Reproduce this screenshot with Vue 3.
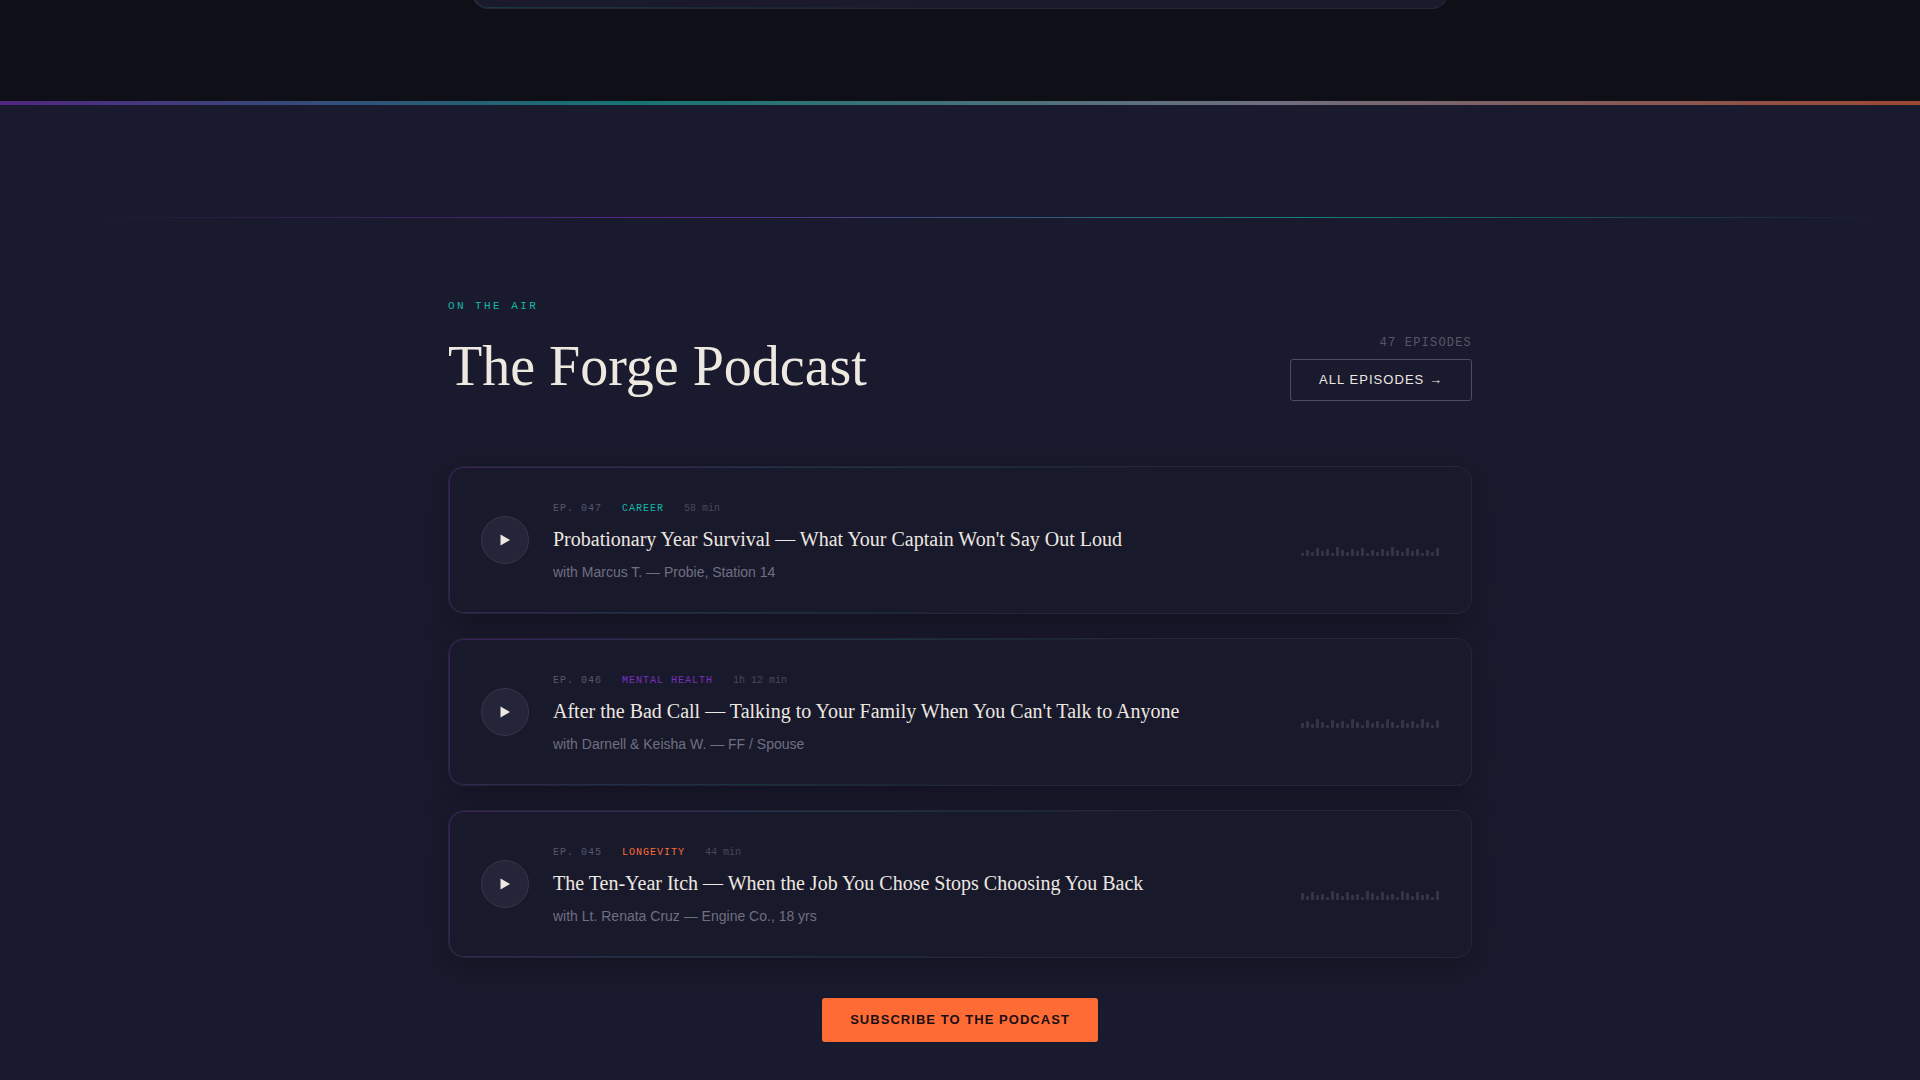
<template>
  <div class="page">
    <section class="previous">
      <div class="panel"></div>
    </section>
    <div class="band"></div>
    <main class="podcast">
      <div class="hairline"></div>
      <div class="container">
        <header class="head">
          <div>
            <p class="eyebrow">ON THE AIR</p>
            <h1>The Forge Podcast</h1>
          </div>
          <div class="head-side">
            <span class="count">47 EPISODES</span>
            <a href="#episodes" class="btn btn-outline">ALL EPISODES →</a>
          </div>
        </header>

        <div id="episodes" class="episodes">
          <article v-for="ep in episodes" :key="ep.number" class="episode">
            <button type="button" class="play" :aria-label="`Play ${ep.title}`">
              <svg width="10" height="12" viewBox="0 0 10 12" aria-hidden="true">
                <path d="M0.5 0.5L10 6L0.5 11.5Z" fill="#ede8e0" />
              </svg>
            </button>
            <div class="info">
              <div class="meta">
                <span class="number">EP. {{ ep.number }}</span>
                <span class="topic" :class="ep.tone">{{ ep.topic }}</span>
                <span class="length">{{ ep.length }}</span>
              </div>
              <h2>{{ ep.title }}</h2>
              <p class="guest">with {{ ep.guest }}</p>
            </div>
            <div class="wave" aria-hidden="true">
              <span v-for="(h, i) in ep.wave" :key="i" :style="{ height: `${h}px` }"></span>
            </div>
          </article>
        </div>

        <div class="subscribe">
          <a href="#subscribe" class="btn btn-solid">SUBSCRIBE TO THE PODCAST</a>
        </div>
      </div>
    </main>
  </div>
</template>

<script setup>
const episodes = [
  {
    number: "047",
    topic: "CAREER",
    tone: "teal",
    length: "58 min",
    title: "Probationary Year Survival — What Your Captain Won't Say Out Loud",
    guest: "Marcus T. — Probie, Station 14",
    wave: [3, 6, 4, 8, 5, 7, 3, 9, 6, 4, 7, 5, 8, 3, 6, 4, 7, 5, 9, 6, 4, 8, 5, 7, 3, 6, 4, 8],
  },
  {
    number: "046",
    topic: "MENTAL HEALTH",
    tone: "purple",
    length: "1h 12 min",
    title: "After the Bad Call — Talking to Your Family When You Can't Talk to Anyone",
    guest: "Darnell & Keisha W. — FF / Spouse",
    wave: [5, 7, 4, 9, 6, 3, 8, 5, 7, 4, 9, 6, 3, 8, 5, 7, 4, 9, 6, 3, 8, 5, 7, 4, 9, 6, 3, 8],
  },
  {
    number: "045",
    topic: "LONGEVITY",
    tone: "orange",
    length: "44 min",
    title: "The Ten-Year Itch — When the Job You Chose Stops Choosing You Back",
    guest: "Lt. Renata Cruz — Engine Co., 18 yrs",
    wave: [7, 4, 8, 5, 6, 3, 9, 7, 4, 8, 5, 6, 3, 9, 7, 4, 8, 5, 6, 3, 9, 7, 4, 8, 5, 6, 3, 9],
  },
];
</script>

<style>
body {
  background: #1a1a2e;
}
</style>

<style scoped>
.page {
  color: #ede8e0;
  font-family: "Liberation Sans", Arial, sans-serif;
  background: #1a1a2e;
  min-height: 100vh;
  overflow: hidden;
}

h1,
h2,
p {
  margin: 0;
  font-weight: 400;
}

.previous {
  display: flow-root;
  overflow: hidden;
  background: #0f0f17;
  padding: 0 24px 92px;
}

/* only the foot of this panel shows above the fold line */
.panel {
  position: relative;
  box-sizing: border-box;
  max-width: 976px;
  height: 49px;
  margin: -40px auto 0;
  background: #1a1a2c;
  border: 1px solid rgba(255, 255, 255, 0.06);
  border-radius: 16px;
}

.panel::before,
.episode::before {
  content: "";
  position: absolute;
  inset: 0;
  padding: 1px;
  border-radius: 15px;
  background: linear-gradient(135deg, rgba(123, 47, 190, 0.35), rgba(20, 184, 166, 0.18) 38%, transparent 62%);
  mask: linear-gradient(#000 0 0) content-box exclude, linear-gradient(#000 0 0);
  pointer-events: none;
}

.panel::before {
  background: linear-gradient(90deg, rgba(20, 184, 166, 0.2), transparent 50%);
}

.band {
  height: 4px;
  background: linear-gradient(90deg, #7b2fbe, #14b8a6 33%, #aeaebd 66%, #ff6b35);
  opacity: 0.57;
}

.podcast {
  padding: 112px 24px 37px;
}

.hairline {
  height: 1px;
  margin: 0 -24px 80px;
  background: linear-gradient(90deg, transparent 4%, #7b2fbe 35%, #14b8a6 68%, transparent 98%);
  opacity: 0.65;
}

.container {
  max-width: 1024px;
  margin: 0 auto;
}

.head {
  display: flex;
  justify-content: space-between;
  align-items: flex-end;
  margin-bottom: 65px;
}

.eyebrow {
  color: #14b8a6;
  font: 11px/17px "Liberation Mono", monospace;
  letter-spacing: 0.22em;
  margin-bottom: 16px;
}

h1 {
  font: 56px/70px "Liberation Serif", serif;
}

.head-side {
  display: flex;
  flex-direction: column;
  align-items: flex-end;
  gap: 8px;
}

.count {
  color: #57576a;
  font: 12px/16px "Liberation Mono", monospace;
  letter-spacing: 0.1em;
}

.btn {
  font-size: 13px;
  line-height: 16px;
  letter-spacing: 0.08em;
  text-decoration: none;
  border-radius: 3px;
}

.btn-outline {
  color: #ede8e0;
  padding: 12px 28px;
  border: 1px solid #4d4d60;
}

.btn-solid {
  color: #1a0f14;
  font-weight: 700;
  padding: 14px 28px;
  background: #ff6b35;
}

.episodes {
  display: grid;
  gap: 24px;
}

.episode {
  position: relative;
  display: flex;
  align-items: center;
  gap: 24px;
  padding: 32px;
  border: 1px solid rgba(255, 255, 255, 0.06);
  border-radius: 16px;
  background: #19192c;
  box-shadow: 0 8px 32px rgba(0, 0, 0, 0.3);
}

.play {
  display: grid;
  place-items: center;
  flex: none;
  width: 48px;
  height: 48px;
  padding: 0;
  border: 1px solid #36364a;
  border-radius: 50%;
  background: #252539;
  cursor: pointer;
}

.info {
  flex: 1;
  min-width: 0;
}

.meta {
  display: flex;
  gap: 20px;
  margin-bottom: 6px;
  font: 10px/20px "Liberation Mono", monospace;
  letter-spacing: 1px;
}

.number {
  color: #57576a;
}

.length {
  color: #47475a;
  letter-spacing: 0;
}

.teal {
  color: #14b8a6;
}

.purple {
  color: #7b2fbe;
}

.orange {
  color: #ff6b35;
}

h2 {
  margin-bottom: 10px;
  font: 20px/28px "Liberation Serif", serif;
}

.guest {
  color: #6f6f80;
  font-size: 14px;
  line-height: 18px;
}

.wave {
  display: flex;
  align-items: flex-end;
  gap: 2px;
  height: 32px;
}

.wave span {
  width: 3px;
  background: #343448;
  border-radius: 1px;
}

.subscribe {
  display: flex;
  justify-content: center;
  margin-top: 40px;
}
</style>
